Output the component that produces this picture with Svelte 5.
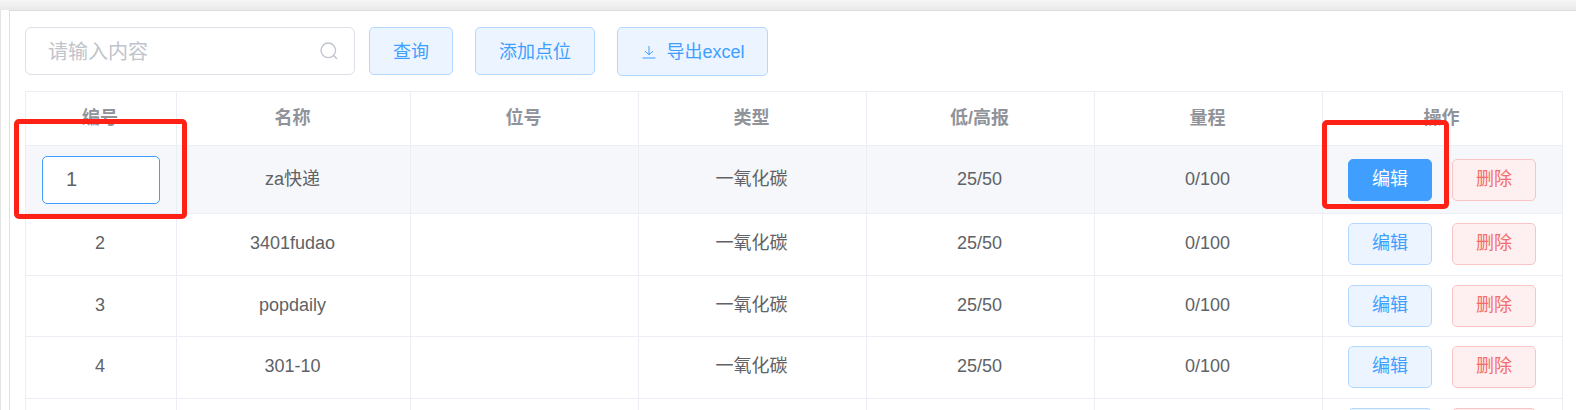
<script>
  const rows = [
    { id: '1', name: 'za快递', active: true },
    { id: '2', name: '3401fudao' },
    { id: '3', name: 'popdaily' },
    { id: '4', name: '301-10' },
    { id: '', name: '', blank: true }
  ];
</script>

<div class="page">
  <div class="topbar"></div>
  <div class="body">
    <div class="panel">
      <div class="toolbar">
        <div class="search">
          <span class="placeholder">请输入内容</span>
          <svg class="search-icon" width="20" height="20" viewBox="0 0 20 20" fill="none" stroke="#c0c4cc" stroke-width="1.4">
            <circle cx="9.3" cy="9.3" r="7.3" />
            <path d="M14.6 14.6 L17.6 17.6" stroke-linecap="round" />
          </svg>
        </div>
        <button class="btn blue query">查询</button>
        <button class="btn blue add">添加点位</button>
        <button class="btn blue export">
          <svg width="14" height="14" viewBox="0 0 14 14" fill="none" stroke="#409eff" stroke-width="1">
            <path d="M7 1 V9.5 M3 6.2 L7 9.8 L11 6.2 M0.5 13 H13.5" />
          </svg>
          <span>导出excel</span>
        </button>
      </div>

      <table>
        <colgroup>
          <col class="c1" /><col class="c2" /><col class="c3" /><col class="c3" /><col class="c3" /><col class="c3" /><col class="c7" />
        </colgroup>
        <thead>
          <tr>
            <th>编号</th><th>名称</th><th>位号</th><th>类型</th><th>低/高报</th><th>量程</th><th>操作</th>
          </tr>
        </thead>
        <tbody>
          {#each rows as r}
            <tr class:active={r.active} class:blank={r.blank}>
              <td>
                {#if r.active}
                  <div class="cell-input">{r.id}</div>
                {:else}
                  {r.id}
                {/if}
              </td>
              <td>{r.name}</td>
              <td></td>
              <td>{r.blank ? '' : '一氧化碳'}</td>
              <td>{r.blank ? '' : '25/50'}</td>
              <td>{r.blank ? '' : '0/100'}</td>
              <td>
                <div class="ops">
                  <button class="btn small" class:blue={!r.active} class:solid={r.active}>{r.blank ? '' : '编辑'}</button>
                  <button class="btn small red">{r.blank ? '' : '删除'}</button>
                </div>
              </td>
            </tr>
          {/each}
        </tbody>
      </table>
    </div>
  </div>
  <div class="mark mark-a"></div>
  <div class="mark mark-b"></div>
</div>

<style>
  :global(body) {
    margin: 0;
    background: #fff;
  }
  .page {
    position: relative;
    width: 1576px;
    height: 410px;
    overflow: hidden;
    font-family: "Liberation Sans", "Noto Sans CJK SC", sans-serif;
    color: #606266;
    font-size: 18px;
    line-height: 24px;
  }
  .topbar {
    height: 10px;
    background: linear-gradient(#f6f6f6, #e9e9e9);
  }
  .body {
    padding-left: 8px;
    border-left: 1px solid #e4e4e4;
  }
  .panel {
    border-top: 1px solid #dddddd;
    border-left: 1px solid #e0e0e0;
    padding: 15px 0 0 15px;
  }
  .toolbar {
    display: flex;
    align-items: center;
    height: 50px;
  }
  .search {
    box-sizing: border-box;
    width: 330px;
    height: 48px;
    border: 1px solid #dcdfe6;
    border-radius: 6px;
    display: flex;
    align-items: center;
    justify-content: space-between;
    padding: 0 15px 0 22px;
    background: #fff;
  }
  .placeholder {
    font-size: 20px;
    color: #c0c4cc;
    padding-top: 1px;
  }
  .btn {
    box-sizing: border-box;
    font-family: inherit;
    font-size: 18px;
    line-height: 24px;
    border-radius: 5px;
    padding: 0 0 2px;
    border: 1px solid transparent;
    background: #fff;
  }
  .blue {
    background: #ecf5ff;
    border-color: #b3d8ff;
    color: #409eff;
  }
  .query {
    width: 84px;
    height: 48px;
    margin-left: 14px;
    padding: 1px 0 0;
  }
  .add {
    width: 120px;
    height: 48px;
    margin-left: 22px;
    padding: 1px 0 0;
  }
  .export {
    width: 151px;
    height: 49px;
    margin-left: 22px;
    display: flex;
    align-items: center;
    justify-content: center;
    gap: 10px;
    padding: 1px 0 0 2px;
  }
  table {
    margin-top: 15px;
    width: 1537px;
    table-layout: fixed;
    border-collapse: collapse;
  }
  .c1 { width: 151px; }
  .c2 { width: 234px; }
  .c3 { width: 228px; }
  .c7 { width: 240px; }
  th, td {
    border: 1px solid #ebeef5;
    text-align: center;
    padding: 0 2px 2px 0;
    font-weight: 400;
    box-sizing: border-box;
  }
  th {
    height: 54px;
    font-weight: 700;
    color: #909399;
  }
  td {
    height: 61.5px;
  }
  tr.active td {
    height: 68px;
    background: #f5f7fa;
  }
  tr.blank td {
    vertical-align: top;
    padding-top: 9px;
  }
  .cell-input {
    box-sizing: border-box;
    width: 118px;
    height: 48px;
    margin: 0 0 -2px 16px;
    border: 1px solid #409eff;
    border-radius: 5px;
    background: #fff;
    font-size: 20px;
    line-height: 44px;
    text-align: left;
    padding-left: 23px;
  }
  .ops {
    display: flex;
    gap: 20px;
    justify-content: flex-start;
    padding-left: 25px;
    margin-bottom: -2px;
  }
  .small {
    width: 84px;
    height: 42px;
  }
  .solid {
    background: #409eff;
    border-color: #409eff;
    color: #fff;
  }
  .red {
    background: #fef0f0;
    border-color: #fbc4c4;
    color: #f56c6c;
  }
  .mark {
    position: absolute;
    box-sizing: border-box;
    border: 5px solid #ff2116;
    border-radius: 5px;
  }
  .mark-a {
    left: 14px;
    top: 119px;
    width: 173px;
    height: 100px;
  }
  .mark-b {
    left: 1322px;
    top: 120px;
    width: 127px;
    height: 89px;
  }
</style>
